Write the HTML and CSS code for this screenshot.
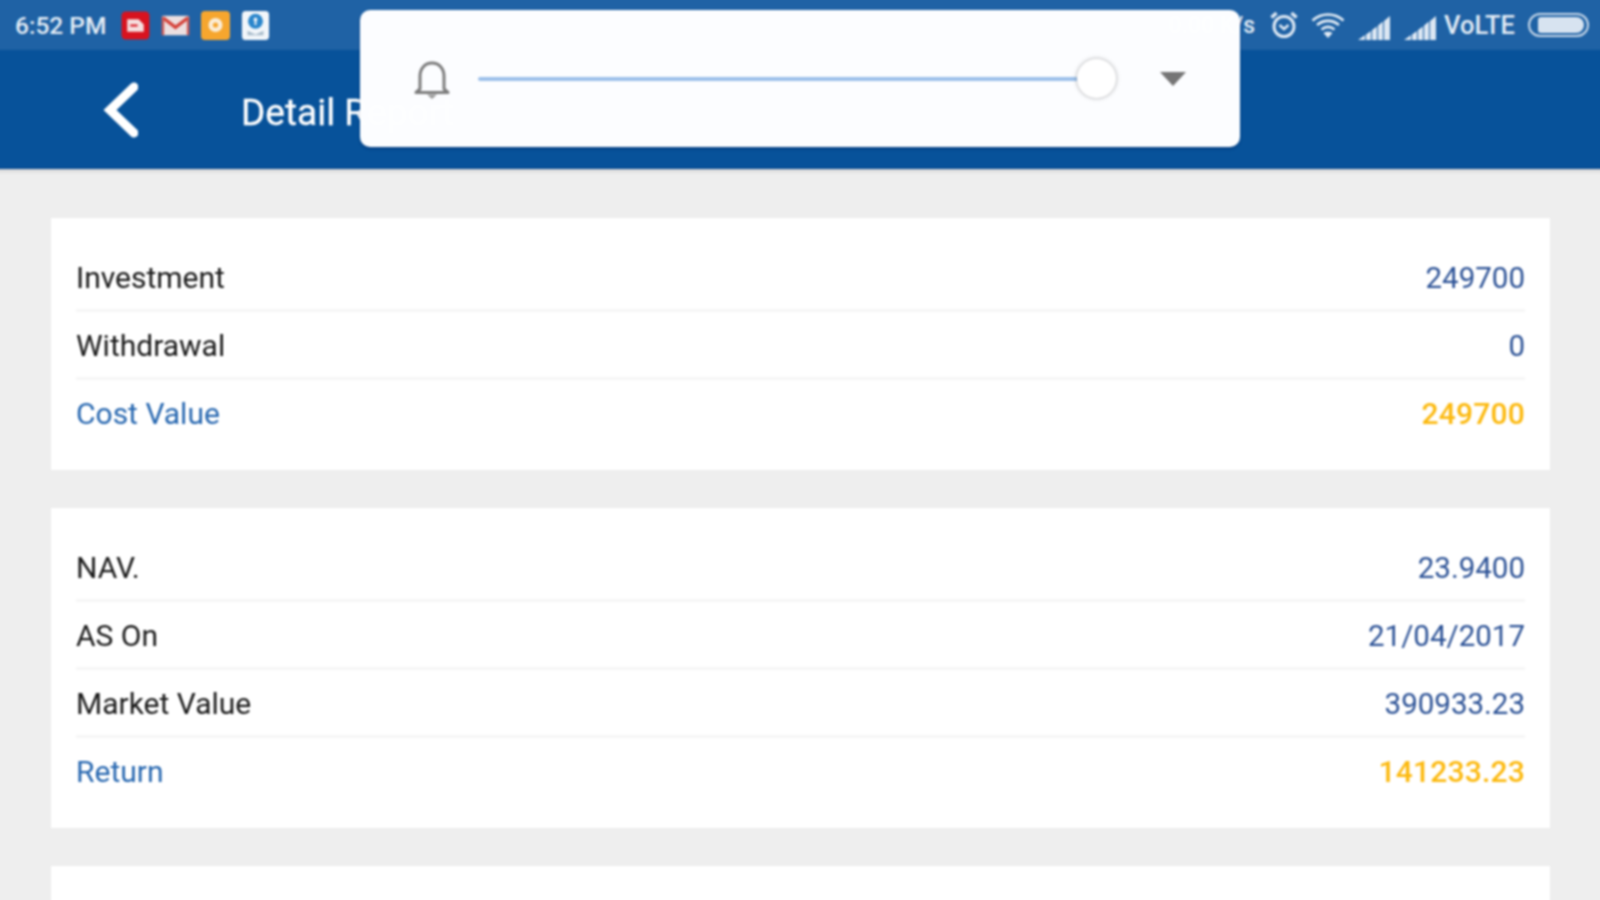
FILE: index.html
```html
<!DOCTYPE html>
<html lang="en">
<head>
    <meta charset="UTF-8">
    <title>Detail Report</title>
    <link rel="stylesheet" href="styles.css">
</head>
<body>

<div class="screen">
    <div class="status-bar">
        <span class="time">6:52 PM</span>
        <svg class="note-icon" viewBox="0 0 28 28">
            <rect x="0.5" y="0.5" width="27" height="27" rx="4" fill="#d8131f"/>
            <path d="M6 8h11l5 5v7H6z" fill="#f6dfe0"/>
            <path d="M9 13h7v2H9z" fill="#d8131f"/>
        </svg>
        <svg class="note-icon" viewBox="0 0 30 28">
            <rect x="1" y="4" width="28" height="20" rx="1.5" fill="#ecdfe0"/>
            <path d="M2 6l13 10L28 6" fill="none" stroke="#d5423a" stroke-width="3.5"/>
            <path d="M2 5v19M28 5v19" stroke="#cf5a55" stroke-width="2.5"/>
        </svg>
        <svg class="note-icon" viewBox="0 0 29 29">
            <rect width="29" height="29" rx="4" fill="#f6a62e"/>
            <circle cx="14.5" cy="14" r="7" fill="#fbeed8"/>
            <circle cx="14.5" cy="14" r="2.6" fill="#f6a62e"/>
        </svg>
        <svg class="note-icon" viewBox="0 0 29 31">
            <rect width="29" height="31" rx="4" fill="#f2f6fa"/>
            <circle cx="14.5" cy="11" r="8" fill="#2a86cc"/>
            <circle cx="14.5" cy="9" r="2" fill="#f2f6fa"/>
            <path d="M13.5 10h2v5h-2z" fill="#f2f6fa"/>
            <path d="M6 21l8.500 4 8.500-4v5H6z" fill="#a9bccb"/>
        </svg>
        <div class="status-right">
            <span class="speed">0.00 K/s</span>
            <svg class="alarm" viewBox="0 0 30 30" fill="none" stroke="#dfe9f4">
                <circle cx="15" cy="16.500" r="10" stroke-width="3"/>
                <path d="M10.500 15l4.500 4 4.500-4" stroke-width="2.500"/>
                <path d="M2.500 7.500l5-4.500M27.500 7.500l-5-4.500" stroke-width="3.500"/>
            </svg>
            <svg class="wifi" viewBox="0 0 34 28" fill="none" stroke="#e4edf6" stroke-width="2.600">
                <path d="M1.500 9.500c9-8 22-8 31 0"/>
                <path d="M6 14c6.500-5.500 15.500-5.500 22 0"/>
                <path d="M10.500 18.500c4-3.200 9-3.200 13 0"/>
                <path d="M17 27l-4.500-5c2.500-1.800 6.500-1.800 9 0z" fill="#e4edf6" stroke="none"/>
            </svg>
            <svg class="signal" viewBox="0 0 32 24" fill="#dbe6f2">
                <path d="M0 24l7-5v5zM8 18.500l5-3.500v9H8zM14 14l5-3.500V24h-5zM20 9.500l5-4V24h-5zM26 5l6-5v24h-6z"/>
            </svg>
            <svg class="signal" viewBox="0 0 32 24" fill="#dbe6f2">
                <path d="M0 24l7-5v5zM8 18.500l5-3.500v9H8zM14 14l5-3.500V24h-5zM20 9.500l5-4V24h-5zM26 5l6-5v24h-6z"/>
            </svg>
            <span class="volte">VoLTE</span>
            <div class="battery"><div class="battery-fill"></div></div>
        </div>
    </div>

    <div class="app-bar">
        <svg class="back" viewBox="0 0 36 56" fill="none" stroke="#ffffff" stroke-width="9" stroke-linecap="round" stroke-linejoin="miter">
            <path d="M32 5L8 28l24 23"/>
        </svg>
        <span class="title">Detail Report</span>
    </div>

    <div class="content">
        <div class="card">
            <div class="row"><span>Investment</span><span class="val">249700</span></div>
            <div class="row"><span>Withdrawal</span><span class="val">0</span></div>
            <div class="row total"><span>Cost Value</span><span class="val">249700</span></div>
        </div>
        <div class="card">
            <div class="row"><span>NAV.</span><span class="val">23.9400</span></div>
            <div class="row"><span>AS On</span><span class="val">21/04/2017</span></div>
            <div class="row"><span>Market Value</span><span class="val">390933.23</span></div>
            <div class="row total"><span>Return</span><span class="val">141233.23</span></div>
        </div>
        <div class="card"></div>
    </div>

    <!-- volume popup over the top bars -->
    <div class="volume">
        <svg class="bell" viewBox="0 0 40 40" fill="none" stroke="#7d7d7d" stroke-width="3">
            <path d="M8 30V17C8 9.500 13 4 20 4s12 5.500 12 13v13l4 3.500H4z" stroke-linejoin="round"/>
            <path d="M15 35.500h10l-5 4.500z" fill="#9a9a9a" stroke="none"/>
        </svg>
        <div class="track"><div class="knob"></div></div>
        <div class="caret"></div>
    </div>
</div>

</body>
</html>
```

FILE: styles.css
```css
* {
    box-sizing: border-box;
}

html, body {
    margin: 0;
    height: 100%;
    overflow: hidden;
}

body {
    font-family: Roboto, sans-serif;
    background-color: #eeeeee;
}

/* 6px bleed on every side, so the blur does not fade at the window edge */
.screen {
    position: relative;
    height: 912px;
    margin: -6px;
    filter: blur(0.8px);
}

/* Status bar */
.status-bar {
    display: flex;
    align-items: center;
    height: 56px;
    padding: 6px 17px 0 21px;
    background-color: #1f62a5;
    color: #e4edf6;
}

.time {
    font-size: 24.5px;
    font-weight: 500;
    margin-right: 9px;
    white-space: nowrap;
}

.note-icon {
    width: 29px;
    height: 29px;
    margin: 0 5px 0 6px;
}

.status-right {
    display: flex;
    align-items: center;
    margin-left: auto;
}

.speed {
    font-size: 23px;
    font-weight: 500;
    margin-right: 14px;
    white-space: nowrap;
}

.alarm {
    width: 30px;
    height: 30px;
    margin-right: 12px;
}

.wifi {
    width: 34px;
    height: 28px;
    margin-right: 13px;
}

.signal {
    width: 32px;
    height: 24px;
    margin-right: 14px;
    margin-top: 6px;
}

.volte {
    font-size: 25.500px;
    font-weight: 500;
    margin-left: -6px;
    margin-right: 13px;
}

.battery {
    width: 61px;
    height: 24px;
    padding: 2px 3px;
    border: 2px solid #c8d8e9;
    border-radius: 12px;
    display: flex;
    justify-content: flex-end;
}

.battery-fill {
    width: 46px;
    background-color: #d7e3f0;
    border-radius: 3px 8px 8px 3px;
}

/* App bar */
.app-bar {
    display: flex;
    align-items: center;
    height: 119px;
    padding: 0 0 0 108px;
    background-color: #07529a;
    box-shadow: 0 2px 4px rgba(0, 0, 0, 0.12);
    border-bottom: 1px solid #0a4a8e;
}

.back {
    width: 36px;
    height: 56px;
    margin-right: 103px;
    margin-top: 2px;
}

.title {
    font-size: 37px;
    color: #ffffff;
    padding-top: 6px;
    -webkit-text-stroke: 0.3px #ffffff;
}

/* Cards */
.content {
    display: flex;
    flex-direction: column;
    gap: 38px;
    padding: 49px 56px 0 57px;
}

.card {
    background-color: white;
    padding: 26px 25px 22px 25px;
}

.card:last-child {
    height: 60px;
}

.row {
    display: flex;
    justify-content: space-between;
    align-items: center;
    height: 68px;
    padding-top: 2px;
    font-size: 30px;
    color: #1a1a1a;
    border-bottom: 3px solid #f6f6f6;
}

.row:last-child {
    border-bottom: none;
    padding-bottom: 3px;
}

.val {
    color: #2c5296;
    font-size: 29.500px;
}

.total {
    color: #2767b0;
}

.total .val {
    color: #fcb90f;
    font-weight: 500;
    font-size: 30px;
    letter-spacing: 0.2px;
}

/* Volume popup */
.volume {
    position: absolute;
    top: 16px;
    left: 366px;
    width: 880px;
    height: 137px;
    display: flex;
    align-items: center;
    background-color: rgba(253, 254, 255, 0.995);
    border-radius: 10px;
    box-shadow: 0 2px 3px rgba(0, 30, 90, 0.35);
}

.bell {
    width: 40px;
    height: 40px;
    margin-left: 52px;
    margin-top: 1px;
}

.track {
    position: relative;
    width: 617px;
    height: 4px;
    margin-left: 26px;
    background-color: #9cc0ea;
    border-radius: 2px;
}

.knob {
    position: absolute;
    right: -21px;
    top: -18px;
    width: 39px;
    height: 39px;
    border-radius: 50%;
    background-color: #ffffff;
    box-shadow: 0 0 4px rgba(0, 0, 0, 0.35);
}

.caret {
    width: 0;
    height: 0;
    margin-left: 65px;
    border-left: 13px solid transparent;
    border-right: 13px solid transparent;
    border-top: 14px solid #757575;
}
```
